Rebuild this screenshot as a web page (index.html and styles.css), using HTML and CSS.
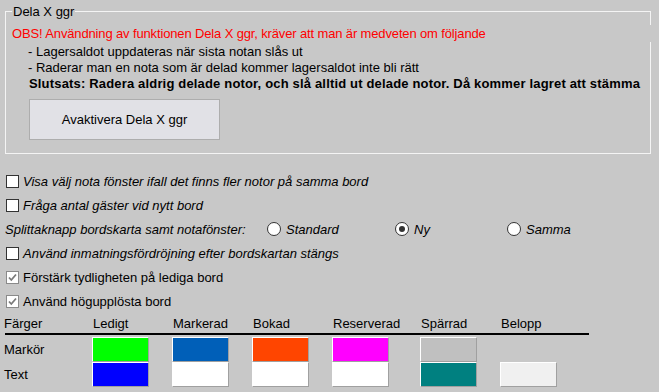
FILE: index.html
```html
<!DOCTYPE html>
<html lang="sv">
<head>
    <meta charset="UTF-8">
    <title>Dela X ggr</title>
    <link rel="stylesheet" href="styles.css">
</head>
<body>
    <fieldset class="group">
        <legend>Dela X ggr</legend>
        <div class="warning">OBS! Användning av funktionen Dela X ggr, kräver att man är medveten om följande</div>
        <div class="note">- Lagersaldot uppdateras när sista notan slås ut</div>
        <div class="note">- Raderar man en nota som är delad kommer lagersaldot inte bli rätt</div>
        <div class="note bold">Slutsats: Radera aldrig delade notor, och slå alltid ut delade notor. Då kommer lagret att stämma</div>
        <button type="button" class="action-btn">Avaktivera Dela X ggr</button>
    </fieldset>

    <!-- Options -->
    <div class="options">
        <div class="row italic"><span class="cb"></span>Visa välj nota fönster ifall det finns fler notor på samma bord</div>
        <div class="row italic"><span class="cb"></span>Fråga antal gäster vid nytt bord</div>
        <div class="row italic radio-row">
            <span class="radio-label">Splittaknapp bordskarta samt notafönster:</span>
            <span class="radio-opt std"><span class="rb"></span>Standard</span>
            <span class="radio-opt ny"><span class="rb on"></span>Ny</span>
            <span class="radio-opt"><span class="rb"></span>Samma</span>
        </div>
        <div class="row italic"><span class="cb"></span>Använd inmatningsfördröjning efter bordskartan stängs</div>
        <div class="row"><span class="cb checked"><svg width="11" height="11" viewBox="0 0 11 11"><path d="M2 5.5 L4.3 8 L9 2.5" fill="none" stroke="#7a7a7a" stroke-width="1.8"/></svg></span>Förstärk tydligheten på lediga bord</div>
        <div class="row"><span class="cb checked"><svg width="11" height="11" viewBox="0 0 11 11"><path d="M2 5.5 L4.3 8 L9 2.5" fill="none" stroke="#7a7a7a" stroke-width="1.8"/></svg></span>Använd högupplösta bord</div>
    </div>

    <!-- Colours -->
    <div class="colors">
        <div class="color-head">
            <span>Färger</span>
            <span>Ledigt</span>
            <span>Markerad</span>
            <span>Bokad</span>
            <span>Reserverad</span>
            <span>Spärrad</span>
            <span>Belopp</span>
        </div>
        <div class="color-row">
            <span>Markör</span>
            <span class="swatch" style="background:#00ff00"></span>
            <span class="swatch" style="background:#005fb8"></span>
            <span class="swatch" style="background:#ff4500"></span>
            <span class="swatch" style="background:#ff00ff"></span>
            <span class="swatch" style="background:#c0c0c0"></span>
            <span></span>
        </div>
        <div class="color-row">
            <span>Text</span>
            <span class="swatch" style="background:#0000ff"></span>
            <span class="swatch" style="background:#ffffff"></span>
            <span class="swatch" style="background:#ffffff"></span>
            <span class="swatch" style="background:#ffffff"></span>
            <span class="swatch" style="background:#008080"></span>
            <span class="swatch" style="background:#f0f0f0"></span>
        </div>
    </div>
</body>
</html>
```

FILE: styles.css
```css
html {
    overflow: hidden;
}
body {
    margin: 0;
    background-color: #c8c8c8;
    font-family: "Liberation Sans", Arial, sans-serif;
    font-size: 13px;
    color: #000;
}
.group {
    margin: 4px 8px 0 5px;
    padding: 0 6px 13px 6px;
    border: 1px solid #f4f4f4;
    min-width: 0;
}
.group legend {
    padding: 0 1px;
    margin-left: 0;
    line-height: 15px;
}
.warning {
    color: #ff0000;
    background-color: #c8c8c8;
    margin-top: 6px;
    margin-right: -15px;
    height: 17px;
    line-height: 17px;
    letter-spacing: -0.14px;
}
.note {
    padding-left: 16px;
    line-height: 16px;
}
.warning + .note {
    margin-top: 2px;
}
.bold {
    font-weight: bold;
    padding-left: 17px;
    letter-spacing: 0.17px;
}
.action-btn {
    display: block;
    margin: 7px 0 0 17px;
    width: 191px;
    height: 41px;
    background-color: #e1e1e6;
    border: 1px solid #adadad;
    font-family: inherit;
    font-size: 13px;
    color: #000;
}
.options {
    margin-top: 15px;
}
.row {
    display: flex;
    align-items: center;
    height: 24px;
    padding-left: 6px;
}
.italic {
    font-style: italic;
}
.cb {
    width: 11px;
    height: 11px;
    border: 1px solid #333;
    background-color: #fff;
    margin-right: 4px;
    display: flex;
    align-items: center;
    justify-content: center;
}
.cb.checked {
    border-color: #8a8a8a;
}
.radio-row {
    padding-left: 5px;
}
.radio-label {
    width: 262px;
}
.radio-opt {
    display: flex;
    align-items: center;
}
.radio-opt.std {
    width: 128px;
}
.radio-opt.ny {
    width: 112px;
}
.rb {
    width: 12px;
    height: 12px;
    border: 1px solid #333;
    border-radius: 50%;
    background-color: #fff;
    margin-right: 5px;
    position: relative;
}
.rb.on::after {
    content: "";
    position: absolute;
    left: 3px;
    top: 3px;
    width: 6px;
    height: 6px;
    border-radius: 50%;
    background-color: #333;
}
.colors {
    padding-left: 4px;
}
.color-head, .color-row {
    display: grid;
    grid-template-columns: 88px 80px 80px 80px 88px 80px 80px;
    align-items: center;
}
.color-head {
    width: 584px;
    height: 20px;
    border-bottom: 2px solid #000;
    margin-left: 1px;
}
.color-head span:first-child {
    margin-left: -1px;
}
.color-row {
    height: 25px;
}
.color-head + .color-row {
    margin-top: 2px;
}
.swatch {
    width: 55px;
    height: 23px;
    border: 1px solid;
    border-color: #fff #a0a0a0 #a0a0a0 #fff;
}
```
